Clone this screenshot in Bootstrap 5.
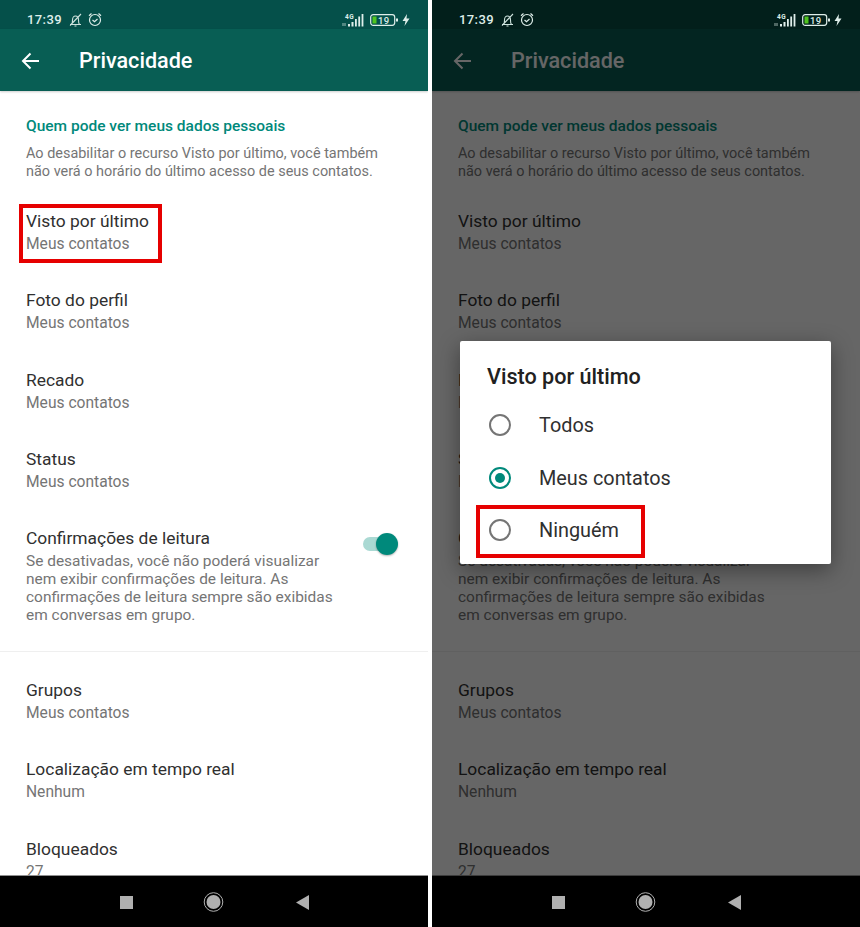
<!DOCTYPE html>
<html lang="pt">
<head>
<meta charset="utf-8">
<title>Privacidade</title>
<link rel="stylesheet" href="https://cdn.jsdelivr.net/npm/bootstrap@5.3.0/dist/css/bootstrap.min.css">
<style>
html,body{margin:0;height:927px;overflow:hidden;background:#fff;font-family:Roboto,"Liberation Sans",sans-serif}
.stage{width:860px;height:927px;gap:4px}
.phone{width:428px;height:927px;overflow:hidden;position:relative;background:#fff}
.sbar{height:29px;background:#05504a;color:#dfeeea;padding:10px 18px 0 27px;font-size:13px;font-weight:500;letter-spacing:.4px;flex:none}
.sbar-dim{background:#021f1b;position:relative;z-index:3}
.abar{height:61.5px;background:#085e54;color:#fff;padding:2px 0 0 21px;flex:none;box-shadow:0 1px 2px rgba(0,0,0,.2);position:relative;z-index:1}
.abar h1{font-size:21.6px;font-weight:500;margin:1px 0 0 39px;line-height:1}
.cont{flex:1 1 auto;overflow:hidden;padding-top:25px;min-height:0}
.sect{padding:0 26px;height:77px}
.sect-t{color:#00897b;font-size:15.5px;font-weight:500;line-height:20px;margin-bottom:9.5px}
.sect-d{color:#757575;font-size:14.45px;line-height:17.5px;margin:0}
.rw{height:79.25px;padding:17.500px 26px 0}
.rtit{font-size:17.4px;line-height:22px;color:#303030}
.rsub{color:#757575;font-size:15.6px;line-height:22px;margin:1px 0 0}
.rw-tall{height:141px}
.rw-tall .rsub{font-size:15.45px;line-height:18.3px;margin-top:2.5px;width:315px}
.tgl{width:35px;height:22px;flex:none;position:relative;margin:5.500px 4px 0 0}
.tgl-b{position:absolute;left:0;top:4px;width:30px;height:14px;border-radius:7px;background:#aad9d3}
.tgl-k{position:absolute;right:0;top:0;width:22px;height:22px;border-radius:50%;background:#00897b;box-shadow:0 1px 2px rgba(0,0,0,.3)}
.sep{height:1px;background:#efefef}
.gap-s{height:10px}
.nbar{height:51px;background:#000;flex:none;position:relative;z-index:3;box-shadow:0 -1px 0 #8f8f8f}
.nbar-dim{box-shadow:0 -1px 0 #3c3c3c}
.nbar svg{display:block}
.scrim{position:absolute;left:0;right:0;top:0;bottom:51px;background:rgba(0,0,0,.6);z-index:2}
.dlg{position:absolute;left:28px;top:341px;width:371px;height:223px;background:#fff;border-radius:2px;box-shadow:0 6px 22px rgba(0,0,0,.4);z-index:4;padding:23px 0 0 27px}
.dlg h2{font-size:21.6px;font-weight:500;line-height:26px;margin:0 0 9px;color:#212121}
.opt{height:52.5px;font-size:19.85px;color:#303030;margin-left:2px}
.opt-l{padding-top:2px}
.rd{width:22px;height:22px;border:2px solid #757575;border-radius:50%;margin-right:28px;flex:none}
.rd-on{border-color:#00897b;position:relative}
.rd-on::after{content:"";position:absolute;inset:4px;border-radius:50%;background:#00897b}
.mk{position:absolute;border:4px solid #e60000;z-index:5}
.mk-a{left:19px;top:204px;width:143px;height:59px}
.mk-b{left:44px;top:505px;width:169px;height:53px}
.bell-gap{margin-left:7px}
.alarm-gap{margin-left:6px}
.batt-gap{margin-left:5px}
</style>
</head>
<body>
<div class="stage d-flex">

<div class="phone d-flex flex-column">
  <div class="sbar d-flex align-items-center justify-content-between">
    <div class="d-flex align-items-center"><span>17:39</span>
      <svg class="bell-gap" width="13" height="14" viewBox="0 0 13 14" fill="none" stroke="#cfe3de" stroke-width="1.1"><path d="M1 11.500h11M2.500 11.500c1-1 1-2.500 1-4.500 0-2.500 1.300-4 3-4s3 1.500 3 4c0 2 0 3.500 1 4.500M5.500 13h2M1 12.500L12 1"/></svg>
      <svg class="alarm-gap" width="14" height="15" viewBox="0 0 14 15" fill="none" stroke="#dfeeea" stroke-width="1.200"><circle cx="7" cy="8" r="5.500"/><path d="M4.500 8l2 1.800L9.500 7M1 3.800l2.500-2.300M13 3.800l-2.500-2.300"/></svg>
    </div>
    <div class="d-flex align-items-center">
      <svg width="23" height="14" viewBox="0 0 23 14"><text x="3" y="6" font-size="6.500" font-family="Roboto" font-weight="700" fill="#dfeeea">4G</text><path d="M1 13V10M3 10v3" stroke="#dfeeea" stroke-width=".7"/><path d="M6 11h2v2.500H6zM9.500 9h2v4.500h-2zM13 6h1.800v7.500H13zM16.300 3.500h1.800v10h-1.800zM19.600 1h1.800v12.500h-1.800z" fill="#dfeeea"/></svg>
      <svg class="batt-gap" width="28" height="14" viewBox="0 0 28 14"><rect x=".7" y="1.700" width="24" height="10.600" rx="2.500" fill="none" stroke="#dfeeea" stroke-width="1.200"/><rect x="2.500" y="3.500" width="4" height="7" fill="#4fc31f"/><text x="8" y="10.500" font-size="9.500" font-family="Roboto" font-weight="500" fill="#dfeeea">19</text><rect x="26" y="5.500" width="2" height="3" fill="#dfeeea"/></svg>
      <svg class="ms-1" width="8" height="12" viewBox="0 0 8 12"><path d="M5 0L0.500 7H3.500L2.500 12L7.500 4.500H4.500Z" fill="#dfeeea"/></svg>
    </div>
  </div>
  <div class="abar d-flex align-items-center">
    <svg width="19" height="18" viewBox="0 0 19 18" fill="none" stroke="#fff" stroke-width="2"><path d="M18 9H2M9.500 1.500L2 9l7.500 7.500"/></svg>
    <h1>Privacidade</h1>
  </div>
  <div class="cont">
    <div class="sect"><div class="sect-t">Quem pode ver meus dados pessoais</div><p class="sect-d">Ao desabilitar o recurso Visto por último, você também<br>não verá o horário do último acesso de seus contatos.</p></div>
    <div class="rw"><div class="rtit">Visto por último</div><div class="rsub">Meus contatos</div></div>
    <div class="rw"><div class="rtit">Foto do perfil</div><div class="rsub">Meus contatos</div></div>
    <div class="rw"><div class="rtit">Recado</div><div class="rsub">Meus contatos</div></div>
    <div class="rw"><div class="rtit">Status</div><div class="rsub">Meus contatos</div></div>
    <div class="rw rw-tall d-flex justify-content-between"><div><div class="rtit">Confirmações de leitura</div><p class="rsub">Se desativadas, você não poderá visualizar<br>nem exibir confirmações de leitura. As<br>confirmações de leitura sempre são exibidas<br>em conversas em grupo.</p></div><div class="tgl"><div class="tgl-b"></div><div class="tgl-k"></div></div></div>
    <div class="sep"></div>
    <div class="gap-s"></div>
    <div class="rw"><div class="rtit">Grupos</div><div class="rsub">Meus contatos</div></div>
    <div class="rw"><div class="rtit">Localização em tempo real</div><div class="rsub">Nenhum</div></div>
    <div class="rw"><div class="rtit">Bloqueados</div><div class="rsub">27</div></div>
  </div>
  <div class="nbar d-flex align-items-center justify-content-center">
    <svg width="200" height="24" viewBox="0 0 200 24"><rect x="6" y="6" width="13" height="13" fill="#b0b0b0"/><circle cx="99.500" cy="12" r="9.300" fill="none" stroke="#b0b0b0" stroke-width="1"/><circle cx="99.500" cy="12" r="7" fill="#b0b0b0"/><path d="M195 5V20L182 12.500Z" fill="#b0b0b0"/></svg>
  </div>
  <div class="mk mk-a"></div>
</div>

<div class="phone d-flex flex-column">
  <div class="sbar sbar-dim d-flex align-items-center justify-content-between">
    <div class="d-flex align-items-center"><span>17:39</span>
      <svg class="bell-gap" width="13" height="14" viewBox="0 0 13 14" fill="none" stroke="#cfe3de" stroke-width="1.1"><path d="M1 11.500h11M2.500 11.500c1-1 1-2.500 1-4.500 0-2.500 1.300-4 3-4s3 1.500 3 4c0 2 0 3.500 1 4.500M5.500 13h2M1 12.500L12 1"/></svg>
      <svg class="alarm-gap" width="14" height="15" viewBox="0 0 14 15" fill="none" stroke="#dfeeea" stroke-width="1.200"><circle cx="7" cy="8" r="5.500"/><path d="M4.500 8l2 1.800L9.500 7M1 3.800l2.500-2.300M13 3.800l-2.500-2.300"/></svg>
    </div>
    <div class="d-flex align-items-center">
      <svg width="23" height="14" viewBox="0 0 23 14"><text x="3" y="6" font-size="6.500" font-family="Roboto" font-weight="700" fill="#dfeeea">4G</text><path d="M1 13V10M3 10v3" stroke="#dfeeea" stroke-width=".7"/><path d="M6 11h2v2.500H6zM9.500 9h2v4.500h-2zM13 6h1.800v7.500H13zM16.300 3.500h1.800v10h-1.800zM19.600 1h1.800v12.500h-1.800z" fill="#dfeeea"/></svg>
      <svg class="batt-gap" width="28" height="14" viewBox="0 0 28 14"><rect x=".7" y="1.700" width="24" height="10.600" rx="2.500" fill="none" stroke="#dfeeea" stroke-width="1.200"/><rect x="2.500" y="3.500" width="4" height="7" fill="#4fc31f"/><text x="8" y="10.500" font-size="9.500" font-family="Roboto" font-weight="500" fill="#dfeeea">19</text><rect x="26" y="5.500" width="2" height="3" fill="#dfeeea"/></svg>
      <svg class="ms-1" width="8" height="12" viewBox="0 0 8 12"><path d="M5 0L0.500 7H3.500L2.500 12L7.500 4.500H4.500Z" fill="#dfeeea"/></svg>
    </div>
  </div>
  <div class="abar d-flex align-items-center">
    <svg width="19" height="18" viewBox="0 0 19 18" fill="none" stroke="#fff" stroke-width="2"><path d="M18 9H2M9.500 1.500L2 9l7.500 7.500"/></svg>
    <h1>Privacidade</h1>
  </div>
  <div class="cont">
    <div class="sect"><div class="sect-t">Quem pode ver meus dados pessoais</div><p class="sect-d">Ao desabilitar o recurso Visto por último, você também<br>não verá o horário do último acesso de seus contatos.</p></div>
    <div class="rw"><div class="rtit">Visto por último</div><div class="rsub">Meus contatos</div></div>
    <div class="rw"><div class="rtit">Foto do perfil</div><div class="rsub">Meus contatos</div></div>
    <div class="rw"><div class="rtit">Recado</div><div class="rsub">Meus contatos</div></div>
    <div class="rw"><div class="rtit">Status</div><div class="rsub">Meus contatos</div></div>
    <div class="rw rw-tall d-flex justify-content-between"><div><div class="rtit">Confirmações de leitura</div><p class="rsub">Se desativadas, você não poderá visualizar<br>nem exibir confirmações de leitura. As<br>confirmações de leitura sempre são exibidas<br>em conversas em grupo.</p></div><div class="tgl"><div class="tgl-b"></div><div class="tgl-k"></div></div></div>
    <div class="sep"></div>
    <div class="gap-s"></div>
    <div class="rw"><div class="rtit">Grupos</div><div class="rsub">Meus contatos</div></div>
    <div class="rw"><div class="rtit">Localização em tempo real</div><div class="rsub">Nenhum</div></div>
    <div class="rw"><div class="rtit">Bloqueados</div><div class="rsub">27</div></div>
  </div>
  <div class="nbar nbar-dim d-flex align-items-center justify-content-center">
    <svg width="200" height="24" viewBox="0 0 200 24"><rect x="6" y="6" width="13" height="13" fill="#b0b0b0"/><circle cx="99.500" cy="12" r="9.300" fill="none" stroke="#b0b0b0" stroke-width="1"/><circle cx="99.500" cy="12" r="7" fill="#b0b0b0"/><path d="M195 5V20L182 12.500Z" fill="#b0b0b0"/></svg>
  </div>
  <div class="scrim"></div>
  <div class="dlg">
    <h2>Visto por último</h2>
    <div class="opt d-flex align-items-center"><span class="rd"></span><span class="opt-l">Todos</span></div>
    <div class="opt d-flex align-items-center"><span class="rd rd-on"></span><span class="opt-l">Meus contatos</span></div>
    <div class="opt d-flex align-items-center"><span class="rd"></span><span class="opt-l">Ninguém</span></div>
  </div>
  <div class="mk mk-b"></div>
</div>
</div>
<script src="https://cdn.jsdelivr.net/npm/bootstrap@5.3.0/dist/js/bootstrap.bundle.min.js"></script>
</body>
</html>
